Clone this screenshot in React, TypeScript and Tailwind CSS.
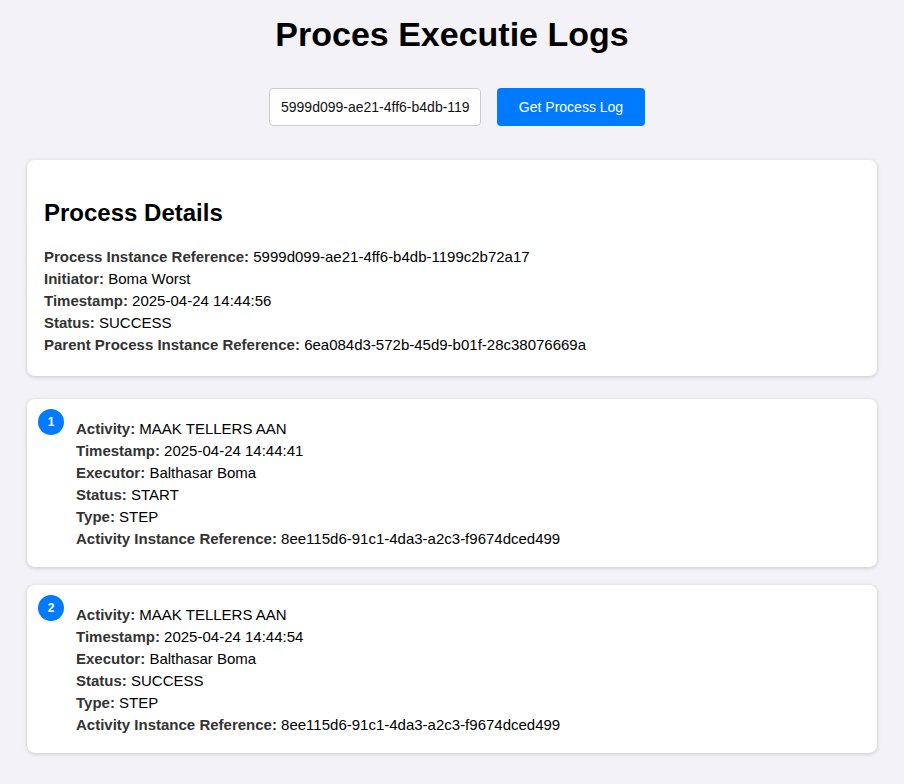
import { useState } from "react";

interface Step {
  activity: string;
  timestamp: string;
  executor: string;
  status: string;
  type: string;
  reference: string;
}

const steps: Step[] = [
  {
    activity: "MAAK TELLERS AAN",
    timestamp: "2025-04-24 14:44:41",
    executor: "Balthasar Boma",
    status: "START",
    type: "STEP",
    reference: "8ee115d6-91c1-4da3-a2c3-f9674dced499",
  },
  {
    activity: "MAAK TELLERS AAN",
    timestamp: "2025-04-24 14:44:54",
    executor: "Balthasar Boma",
    status: "SUCCESS",
    type: "STEP",
    reference: "8ee115d6-91c1-4da3-a2c3-f9674dced499",
  },
];

function Row({ label, value }: { label: string; value: string }) {
  return (
    <div className="leading-[22px]">
      <span className="font-bold text-[#333]">{label}:</span> {value}
    </div>
  );
}

export default function App() {
  const [ref, setRef] = useState("5999d099-ae21-4ff6-b4db-1199c2b72a17");

  return (
    <div className="min-h-screen bg-[#f3f3f7] px-[27px] pt-[14px] pb-6 text-[15px] text-black font-['Liberation_Sans',Arial,sans-serif]">
      <h1 className="text-center text-[34px] font-bold leading-[40px]">
        Proces Executie Logs
      </h1>

      <div className="mt-[34px] flex justify-center gap-4 pl-[10px]">
        <input
          value={ref}
          onChange={(e) => setRef(e.target.value)}
          className="h-[38px] w-[212px] rounded border border-[#ccc] bg-white px-[11px] text-[14px] text-[#111] outline-none"
        />
        <button className="h-[38px] w-[148px] rounded bg-[#007bff] text-[14px] text-white">
          Get Process Log
        </button>
      </div>

      <div className="mt-[34px] rounded-lg bg-white px-[17px] pt-[39px] pb-[20px] shadow-[0_1px_4px_rgba(0,0,0,0.18)]">
        <h2 className="text-[24px] font-bold leading-[28px]">Process Details</h2>
        <div className="mt-[19px]">
          <Row label="Process Instance Reference" value="5999d099-ae21-4ff6-b4db-1199c2b72a17" />
          <Row label="Initiator" value="Boma Worst" />
          <Row label="Timestamp" value="2025-04-24 14:44:56" />
          <Row label="Status" value="SUCCESS" />
          <Row label="Parent Process Instance Reference" value="6ea084d3-572b-45d9-b01f-28c38076669a" />
        </div>
      </div>

      <div className="mt-[23px] flex flex-col gap-[18px]">
        {steps.map((s, i) => (
          <div
            key={i}
            className="flex rounded-lg bg-white pl-[11px] pt-[10px] pb-[17px] shadow-[0_1px_4px_rgba(0,0,0,0.18)]"
          >
            <div className="flex h-[26px] w-[26px] shrink-0 items-center justify-center rounded-full bg-[#007bff] text-[12px] font-bold text-white">
              {i + 1}
            </div>
            <div className="ml-[12px] pt-[9px]">
              <Row label="Activity" value={s.activity} />
              <Row label="Timestamp" value={s.timestamp} />
              <Row label="Executor" value={s.executor} />
              <Row label="Status" value={s.status} />
              <Row label="Type" value={s.type} />
              <Row label="Activity Instance Reference" value={s.reference} />
            </div>
          </div>
        ))}
      </div>
    </div>
  );
}
